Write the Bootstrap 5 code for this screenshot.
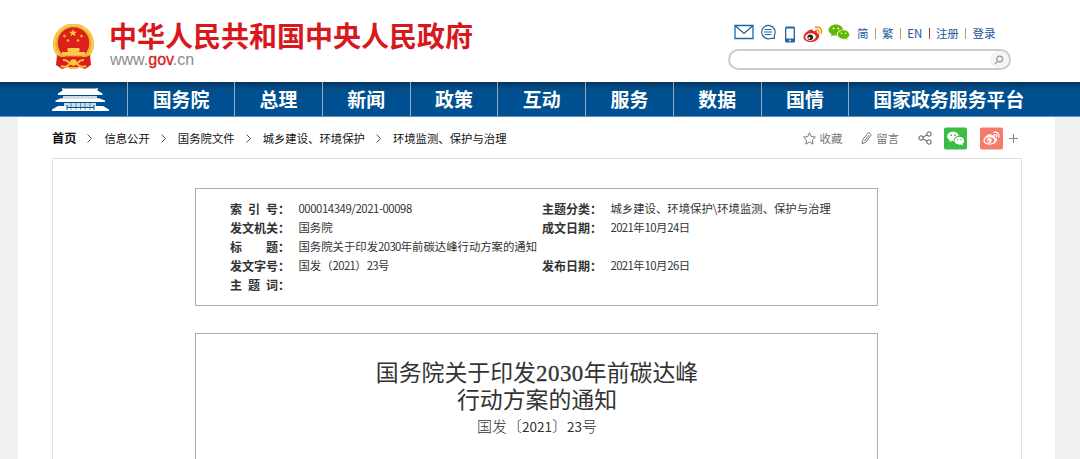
<!DOCTYPE html>
<html lang="zh-CN">
<head>
    <meta charset="UTF-8">
    <title>国务院关于印发2030年前碳达峰行动方案的通知</title>
    <meta name="viewport" content="width=device-width, initial-scale=1.0">

    <link href="https://cdn.jsdelivr.net/npm/bootstrap@5.3.0/dist/css/bootstrap.min.css" rel="stylesheet">

    <style>
        body {
            background: #f1f1f1;
            color: #333;
            font-family: "Noto Sans CJK SC", sans-serif;
            font-size: 11.36px;
            line-height: 19px;
        }

        a {
            color: inherit;
            text-decoration: none;
        }

        svg {
            display: block;
            flex: none;
        }

        .site-header {
            height: 82px;
            padding: 20px 69px 0 52px;
        }

        .brand-text {
            padding-left: 14px;
        }

        .site-name {
            margin: -1px 0 0;
            color: #d7191d;
            font-size: 28px;
            font-weight: 700;
            line-height: 32px;
        }

        .site-url {
            color: #8c8c8c;
            font: 16px/16px "Liberation Sans", sans-serif;
            margin: 1px 0 0 1px;
        }

        .site-url b {
            color: #d7191d;
            font-weight: 400;
            -webkit-text-stroke: .3px #d7191d;
        }

        .tools {
            width: 283px;
        }

        .tool-icons {
            height: 24px;
            padding-left: 6px;
        }

        .tool-links {
            color: #17579a;
            font-size: 11.5px;
            padding: 3px 0 0 7px;
        }

        .tool-links i {
            width: 1px;
            height: 11px;
            margin: 0 6.3px;
            background: #b79d67;
        }

        .tool-links .sep-red {
            background: #a5403c;
        }

        .icon-chat {
            margin: 0 5px 0 6px;
        }

        .search-bar {
            height: 21px;
            margin-top: 5px;
            border: 2px solid #ccc;
            border-radius: 11px;
            padding-right: 1px;
        }

        .search-btn {
            width: 18px;
            height: 17px;
            border-radius: 50%;
            background: #f4f4f4;
        }

        .main-nav {
            height: 35px;
            padding-left: 52px;
            color: #fff;
            background: linear-gradient(#063561, #00508f 8px, #005194);
            border-bottom: 1px solid #6293bb;
            font-size: 18.9px;
            font-weight: 700;
        }

        .main-nav a {
            width: 87.75px;
            border-left: 1px solid #8fa9bf;
            line-height: 33px;
            text-align: center;
        }

        .main-nav .home-link {
            width: 75px;
            border: 0;
            padding-top: 5px;
        }

        .main-nav .wide-link {
            width: 107px;
        }

        .main-nav .last-link {
            width: 200px;
        }

        .page-body {
            width: 1037px;
            height: 342px;
            margin-left: 18px;
            padding: 0 34px;
        }

        .crumb-bar {
            height: 41px;
            padding-top: 1px;
            color: #111;
        }

        .crumb-bar b {
            font-size: 12.2px;
        }

        .crumb-bar .chev {
            margin: 0 12px 0 11px;
        }

        .share-bar {
            color: #777;
            padding-right: 3px;
        }

        .share-bar .fav-text {
            margin: 0 19px 0 4px;
        }

        .share-bar .msg-text {
            margin: 0 19px 0 4px;
        }

        .share-bar .weixin {
            margin: 0 13px 0 12px;
        }

        .share-bar .weibo {
            margin-right: 6px;
        }

        .doc-frame {
            width: 970px;
            height: 301px;
            border: 1px solid #e1e1e1;
            border-bottom: 0;
            padding: 29px 142px 0;
        }

        .doc-info {
            width: 683px;
            height: 118px;
            border: 1px solid #adadad;
            padding: 10px 0 0 34px;
        }

        .info-row {
            height: 19px;
        }

        .info-label {
            width: 68.5px;
            font-size: 12px;
            font-weight: 700;
            white-space: pre;
        }

        .info-label .head {
            display: inline-block;
            width: 48px;
            text-align: justify;
            text-align-last: justify;
            white-space: normal;
        }

        .info-value {
            width: 243.5px;
            white-space: nowrap;
        }

        .num {
            letter-spacing: -.63px;
        }

        .num-code {
            letter-spacing: -.43px;
        }

        .doc-main {
            width: 683px;
            height: 126px;
            margin-top: 27px;
            border: 1px solid #adadad;
            border-bottom: 0;
            padding: 27px 0 0 1px;
            text-align: center;
        }

        .doc-main h1 {
            margin: 0;
            color: #333;
            font-family: "Liberation Serif", "Noto Sans CJK SC", serif;
            font-size: 22.9px;
            font-weight: 400;
            line-height: 26.5px;
        }

        .doc-main h1 span {
            letter-spacing: .5px;
            -webkit-text-stroke: .3px #333;
        }

        .doc-main .doc-no {
            font-size: 15px;
            font-weight: 300;
            line-height: 24px;
            margin: 0;
        }

        .doc-no span {
            font-size: 13.5px;
            font-weight: 400;
        }
    </style>
</head>
<body>

    <header class="site-header bg-white d-flex justify-content-between">
        <div class="d-flex">
            <svg width="43" height="47" viewBox="0 0 43 47" class="mt-1">
                <circle cx="21.5" cy="20" r="20.5" fill="#edb42d"/>
                <circle cx="21.5" cy="20" r="19" fill="none" stroke="#f9d35b" stroke-width="1.4"/>
                <path d="M5 31l4 2h25l4-2 1 10-6 4-6-2-5.5 2-5.5-2-6 2-6-4z" fill="#d91f1d"/>
                <circle cx="21.5" cy="19" r="15.8" fill="#dc211d"/>
                <path d="M21 5l1 2.700h3l-2.400 1.700 1 2.900-2.600-1.800-2.500 1.800.9-2.900-2.400-1.700h3z" fill="#ffd63e"/>
                <g fill="#f6b82f">
                    <circle cx="12.5" cy="12" r="1.3"/><circle cx="29.5" cy="12" r="1.3"/>
                    <circle cx="16" cy="16.5" r="1.3"/><circle cx="26" cy="16.5" r="1.3"/>
                </g>
                <path d="M16 24h11l1 2-1 1v1h6v4H10v-4h6v-1l-1-1z" fill="#fac947"/>
                <path d="M9 32h25" stroke="#f29c2b"/>
                <path d="M11 36c4 0 6 2 7 4l3.500-2.500L25 40c1-2 3-4 7-4M9 42c5 2 8-1 9-3M34 42c-5 2-8-1-9-3M17 44h9" fill="none" stroke="#f5bd38" stroke-width="2"/>
                <circle cx="21.5" cy="38.5" r="3.3" fill="#f8c83f"/>
            </svg>
            <div class="brand-text">
                <h1 class="site-name text-nowrap">中华人民共和国中央人民政府</h1>
                <p class="site-url">www.<b>gov</b>.cn</p>
            </div>
        </div>

        <div class="tools">
            <div class="tool-icons d-flex align-items-center">
                <svg width="20" height="16" viewBox="0 0 20 16" fill="none" stroke="#22659f" stroke-width="1.3"><path d="M1 1.500h18v13H1zM1.500 2l8.500 7.500L18.500 2"/></svg>
                <svg width="16" height="16" viewBox="0 0 16 16" class="icon-chat" fill="none" stroke="#22659f" stroke-width="1.2"><path d="M11 14.300h3.300v-3A6.700 6.700 0 1 0 11 14.300zM4.500 5.500h7M4 8h8M4.500 10.500h7"/></svg>
                <svg width="10" height="17" viewBox="0 0 10 16" class="ms-1 mt-1"><rect width="10" height="16" rx="1.5" fill="#22659f"/><path d="M1.300 2h7.400v10H1.300z" fill="#fff"/><circle cx="5" cy="14" r=".9" fill="#fff"/></svg>
                <svg width="21" height="17" viewBox="0 0 21 17" class="ms-2 mt-1">
                    <path d="M8 3.500c1.500-.4 2.400.2 2 1.700 2.300-1 4.500-.6 3.900 1.700 1.800.6 2.800 1.700 2.300 3.600-.7 3.500-4.700 5.700-9 5.500C3.500 15.800.5 14 .5 11.200.5 8 4.800 4.200 8 3.500z" fill="#df2b22"/>
                    <ellipse cx="7.600" cy="11" rx="5.3" ry="3.7" transform="rotate(-8 7.600 11)" fill="#fff"/>
                    <circle cx="7.2" cy="11.2" r="2.8" fill="#222"/><circle cx="6.3" cy="12" r="1" fill="#fff"/>
                    <path d="M12.500 1.300c4-1 7 2 5.800 6M13 4c2-.4 3.300.8 2.800 2.600" fill="none" stroke="#f39b2e" stroke-width="1.6" stroke-linecap="round"/>
                </svg>
                <svg width="22" height="17" viewBox="0 0 22 17" class="ms-1">
                    <path d="M8 .5c4 0 7 2.400 7 5.500-4 0-7 2-6 5.500-1 .1-2.400 0-3.500-.3L3 12.500l.6-2.300C1.500 9 .5 7.600.5 6 .5 3 4 .5 8 .5z" fill="#62b900"/>
                    <path d="M15.500 6c3.300 0 6 2 6 4.600 0 1.500-.8 2.700-2.300 3.600l.5 2-2.200-1.200c-4 .8-8-1.300-8-4.400C9.500 8 12.200 6 15.500 6z" fill="#62b900" stroke="#fff" stroke-width=".6"/>
                    <g fill="#fff"><circle cx="5.5" cy="4.5" r=".9"/><circle cx="10.3" cy="4.5" r=".9"/><circle cx="13.5" cy="9.3" r=".8"/><circle cx="17.5" cy="9.3" r=".8"/></g>
                </svg>
                <div class="tool-links d-flex align-items-center text-nowrap">
                    <a href="#">简</a><i></i><a href="#">繁</a><i></i><a href="#">EN</a><i class="sep-red"></i><a href="#">注册</a><i></i><a href="#">登录</a>
                </div>
            </div>
            <div class="search-bar d-flex justify-content-end">
                <span class="search-btn d-flex align-items-center justify-content-center">
                    <svg width="10" height="10" viewBox="0 0 10 10" fill="none" stroke="#999" stroke-width="1.2"><circle cx="5.7" cy="4" r="2.9"/><path d="M3.600 6.200L1 9"/></svg>
                </span>
            </div>
        </div>
    </header>

    <nav class="main-nav d-flex text-nowrap">
        <a href="#" class="home-link">
            <svg width="57" height="25" viewBox="0 0 57 25" fill="#fff">
                <path d="M10 .8l2 .8h32l2-.8-.5 2.700 5 3v1.500H6V6.500l4.500-3z"/>
                <path d="M11 9h34v2.500H11z" opacity=".8"/>
                <path d="M9 11.300h38l6 2.200V15H3.500v-1.500z"/>
                <path d="M12 16h32v4H12z" opacity=".8"/>
                <path d="M6 19h9v2h27v-2h9l6 3.500V24H0v-1.500z"/>
                <path d="M19 16v7M24 16v7M28.500 16v7M33 16v7M38 16v7" stroke="#005194" stroke-width=".8" opacity=".7"/>
                <path d="M15 18v5M42 18v5" stroke="#005194"/>
            </svg>
        </a>
        <a href="#" class="wide-link">国务院</a>
        <a href="#">总理</a>
        <a href="#">新闻</a>
        <a href="#">政策</a>
        <a href="#">互动</a>
        <a href="#">服务</a>
        <a href="#">数据</a>
        <a href="#">国情</a>
        <a href="#" class="last-link">国家政务服务平台</a>
    </nav>

    <main class="page-body bg-white">
        <div class="crumb-bar d-flex justify-content-between align-items-center">
            <div class="d-flex align-items-center text-nowrap">
                <a href="#"><b>首页</b></a>
                <svg class="chev" width="5" height="9" viewBox="0 0 5 9" fill="none" stroke="#555"><path d="M.5.5l4 4-4 4"/></svg>
                <a href="#">信息公开</a>
                <svg class="chev" width="5" height="9" viewBox="0 0 5 9" fill="none" stroke="#555"><path d="M.5.5l4 4-4 4"/></svg>
                <a href="#">国务院文件</a>
                <svg class="chev" width="5" height="9" viewBox="0 0 5 9" fill="none" stroke="#555"><path d="M.5.5l4 4-4 4"/></svg>
                <a href="#">城乡建设、环境保护</a>
                <svg class="chev" width="5" height="9" viewBox="0 0 5 9" fill="none" stroke="#555"><path d="M.5.5l4 4-4 4"/></svg>
                <a href="#">环境监测、保护与治理</a>
            </div>
            <div class="share-bar d-flex align-items-center">
                <svg width="13" height="13" viewBox="0 0 13 13" fill="none" stroke="#777" stroke-linejoin="round"><path d="M6.500.8l1.800 3.700 4.100.6-3 2.900.7 4.100-3.600-2-3.700 2 .7-4.100-3-2.900 4.200-.6z"/></svg>
                <a href="#" class="fav-text">收藏</a>
                <svg width="11" height="13" viewBox="0 0 11 13" fill="none" stroke="#777"><path d="M1 11.800l.8-4.300L6.500 1.400q1-1 2.500-.1t.8 2.200L5 10zM8 3L3.500 9"/></svg>
                <a href="#" class="msg-text">留言</a>
                <svg width="14" height="14" viewBox="0 0 14 14" fill="none" stroke="#555"><circle cx="3" cy="7" r="2.2"/><circle cx="11" cy="3" r="2.2"/><circle cx="11" cy="11" r="2.2"/><path d="M5 6l4-2M5 8l4 2"/></svg>
                <svg width="23" height="23" viewBox="0 0 24 23" class="weixin">
                    <rect width="24" height="23" rx="2" fill="#39bd45"/>
                    <path d="M9.500 4.500c3.300 0 5.800 2 6 4.500-3.500 0-6 2.300-5.200 5.200l-2.300-.2-2.300 1.500.4-2.200C4.300 12.400 3.300 11 3.300 9.500c0-2.800 2.800-5 6.200-5z" fill="#fff"/>
                    <path d="M16 9.800c2.900 0 5 1.800 5 4 0 1.300-.7 2.400-1.800 3.100l.4 2-2-1.100c-3.500.6-6.700-1.300-6.700-4 0-2.200 2.200-4 5.100-4z" fill="#fff"/>
                    <g fill="#39bd45"><circle cx="7.5" cy="8" r=".9"/><circle cx="11.5" cy="8" r=".9"/><circle cx="14.3" cy="12.7" r=".7"/><circle cx="17.8" cy="12.7" r=".7"/></g>
                </svg>
                <svg width="23" height="23" viewBox="0 0 24 23" class="weibo">
                    <rect width="24" height="23" rx="2" fill="#f47c6b"/>
                    <path d="M10 7c1.400-.4 2.200.2 1.900 1.600 2.200-.9 3.900-.4 3.400 1.500 1.800.6 2.700 1.500 2.300 3.200-.7 3-4.300 4.700-8 4.600-3.400-.1-6-1.700-6-4.100C3.600 11 7.200 7.500 10 7z" fill="#fff"/>
                    <ellipse cx="10" cy="13.5" rx="4.9" ry="3.2" fill="#f47c6b"/><circle cx="9.7" cy="13.6" r="2.5" fill="#fff"/><circle cx="9" cy="14" r=".9" fill="#f47c6b"/>
                    <path d="M14.500 5c3.500-.7 6 1.800 5 5.200M15 7.500c1.700-.3 2.700.7 2.300 2.100" fill="none" stroke="#fff" stroke-width="1.3" stroke-linecap="round"/>
                </svg>
                <svg width="9" height="9" viewBox="0 0 9 9" stroke="#888"><path d="M4.500 0v9M0 4.500h9"/></svg>
            </div>
        </div>

        <section class="doc-frame">
            <div class="doc-info">
                <div class="info-row d-flex">
                    <div class="info-label"><span class="head">索 引 号</span>：</div>
                    <div class="info-value"><span class="num-code">000014349/2021-00098</span></div>
                    <div class="info-label">主题分类：</div>
                    <div class="info-value">城乡建设、环境保护\环境监测、保护与治理</div>
                </div>
                <div class="info-row d-flex">
                    <div class="info-label">发文机关：</div>
                    <div class="info-value">国务院</div>
                    <div class="info-label">成文日期：</div>
                    <div class="info-value"><span class="num">2021</span>年<span class="num">10</span>月<span class="num">24</span>日</div>
                </div>
                <div class="info-row d-flex">
                    <div class="info-label"><span class="head">标 题</span>：</div>
                    <div class="info-value">国务院关于印发<span class="num">2030</span>年前碳达峰行动方案的通知</div>
                </div>
                <div class="info-row d-flex">
                    <div class="info-label">发文字号：</div>
                    <div class="info-value">国发（<span class="num">2021</span>）<span class="num">23</span>号</div>
                    <div class="info-label">发布日期：</div>
                    <div class="info-value"><span class="num">2021</span>年<span class="num">10</span>月<span class="num">26</span>日</div>
                </div>
                <div class="info-row d-flex">
                    <div class="info-label"><span class="head">主 题 词</span>：</div>
                </div>
            </div>

            <article class="doc-main">
                <h1>国务院关于印发<span>2030</span>年前碳达峰<br>行动方案的通知</h1>
                <p class="doc-no">国发〔<span>2021</span>〕<span>23</span>号</p>
            </article>
        </section>
    </main>

<script src="https://cdn.jsdelivr.net/npm/bootstrap@5.3.0/dist/js/bootstrap.bundle.min.js"></script>
</body>
</html>
